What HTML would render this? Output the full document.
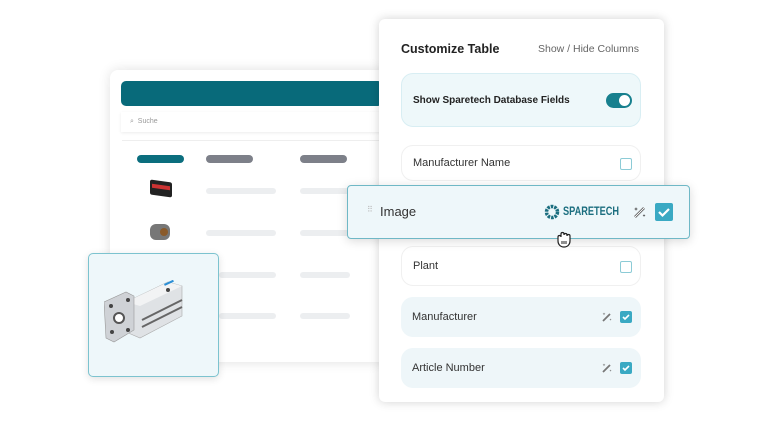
<!DOCTYPE html>
<html><head><meta charset="utf-8"><style>
*{margin:0;padding:0;box-sizing:border-box}
body{width:768px;height:432px;background:#fff;position:relative;overflow:hidden;font-family:"Liberation Sans",sans-serif;color:#333}
.abs{position:absolute}
.pill{position:absolute;height:8px;border-radius:4px}
.line{position:absolute;height:6px;border-radius:3px;background:#eceef0}
.row{position:absolute;left:401px;width:240px;border-radius:12px;font-size:11px;display:flex;align-items:center;padding-left:11px}
.cb{position:absolute;width:12px;height:12px;border:1.5px solid #8ccbd6;border-radius:2px;background:#fff}
.cbf{position:absolute;width:12px;height:12px;border-radius:2px;background:#3aa9c3}
.cbf svg{position:absolute;left:0;top:0}
</style></head><body>
<div class="abs" style="left:110px;top:70px;width:280px;height:292px;background:#fff;border-radius:8px;box-shadow:0 0 12px rgba(0,0,0,.12)"></div>
<div class="abs" style="left:121px;top:81px;width:262px;height:25px;background:#086a7a;border-radius:5px"></div>
<div class="abs" style="left:121px;top:112px;width:262px;height:20px;background:#fff;box-shadow:0 1px 3px rgba(0,0,0,.08)"></div>
<div class="abs" style="left:130px;top:118px;font-size:7px;color:#999">⌕ &nbsp;Suche</div>
<div class="abs" style="left:122px;top:140px;width:262px;height:210px;border-top:1px solid #eee"></div>
<div class="pill" style="left:137px;top:155px;width:47px;background:#0b6e7e"></div>
<div class="pill" style="left:206px;top:155px;width:47px;background:#7d8089"></div>
<div class="pill" style="left:300px;top:155px;width:47px;background:#7d8089"></div>
<div class="line" style="left:206px;top:188px;width:70px"></div>
<div class="line" style="left:300px;top:188px;width:50px"></div>
<div class="line" style="left:206px;top:230px;width:70px"></div>
<div class="line" style="left:300px;top:230px;width:50px"></div>
<div class="line" style="left:219px;top:272px;width:57px"></div>
<div class="line" style="left:300px;top:272px;width:50px"></div>
<div class="line" style="left:219px;top:313px;width:57px"></div>
<div class="line" style="left:300px;top:313px;width:50px"></div>
<div class="abs" style="left:150px;top:181px;width:22px;height:15px;background:#222;border-radius:2px;transform:skewY(8deg)"><div style="margin:4px 2px;height:4px;background:#c33"></div></div>
<div class="abs" style="left:150px;top:224px;width:20px;height:16px;background:#777;border-radius:6px"><div style="margin:4px 0 0 10px;width:8px;height:8px;background:#8a5a2a;border-radius:50%"></div></div>
<div class="abs" style="left:88px;top:253px;width:131px;height:124px;background:#eef7fa;border:1.5px solid #7cc3cf;border-radius:5px;box-shadow:0 2px 8px rgba(0,0,0,.12)"></div>
<svg class="abs" style="left:104px;top:280px" width="100" height="80" viewBox="0 0 100 80">
<polygon points="22,22 64,2 78,6 78,36 36,58 22,52" fill="#dfe2e5" stroke="#aaa" stroke-width=".6"/>
<polygon points="22,22 64,2 78,6 36,26" fill="#f2f3f4"/>
<line x1="38" y1="40" x2="78" y2="20" stroke="#666" stroke-width="2"/>
<line x1="38" y1="47" x2="78" y2="27" stroke="#666" stroke-width="2"/>
<polygon points="0,22 22,12 30,16 30,50 10,62 2,58" fill="#cfd2d6" stroke="#999" stroke-width=".6"/>
<circle cx="15" cy="38" r="5" fill="#fff" stroke="#555" stroke-width="2"/>
<circle cx="7" cy="26" r="2" fill="#444"/><circle cx="24" cy="20" r="2" fill="#444"/><circle cx="24" cy="50" r="2" fill="#444"/><circle cx="8" cy="52" r="2" fill="#444"/>
<circle cx="64" cy="10" r="2" fill="#444"/>
<rect x="60" y="4" width="10" height="2" fill="#2b8fd6" transform="rotate(-25 60 4)"/>
</svg>
<div class="abs" style="left:379px;top:19px;width:285px;height:383px;background:#fff;border-radius:6px;box-shadow:0 0 10px rgba(0,0,0,.18)"></div>
<div class="abs" style="left:401px;top:42px;font-size:12.5px;font-weight:bold;color:#222">Customize Table</div>
<div class="abs" style="left:538px;top:43px;font-size:10.5px;color:#666">Show / Hide Columns</div>
<div class="row" style="top:73px;height:54px;background:#eef8fa;border:1px solid #d8eef3;font-weight:bold;font-size:10px;color:#222">Show Sparetech Database Fields</div>
<div class="abs" style="left:606px;top:93px;width:26px;height:15px;border-radius:8px;background:#17808e"><div style="position:absolute;right:2px;top:2px;width:11px;height:11px;border-radius:50%;background:#fff"></div></div>
<div class="row" style="top:145px;height:36px;border:1px solid #f0f0f0">Manufacturer Name</div>
<div class="cb" style="left:620px;top:158px"></div>
<div class="row" style="top:246px;height:40px;border:1px solid #f0f0f0">Plant</div>
<div class="cb" style="left:620px;top:261px"></div>
<div class="row" style="top:297px;height:40px;background:#eef6f9">Manufacturer</div>
<svg class="abs" style="left:601px;top:311px" width="12" height="12" viewBox="0 0 12 12"><path d="M2 10L9 3" stroke="#777" stroke-width="1.8"/><path d="M3 1.5l.4 1 1 .4-1 .4L3 4.3l-.4-1-1-.4 1-.4zM9.5 7.5l.3.8.8.3-.8.3-.3.8-.3-.8-.8-.3.8-.3z" fill="#777"/></svg>
<div class="cbf" style="left:620px;top:311px"><svg width="12" height="12"><path d="M3 6l2 2 4-4" stroke="#fff" stroke-width="1.6" fill="none"/></svg></div>
<div class="row" style="top:348px;height:40px;background:#eef6f9">Article Number</div>
<svg class="abs" style="left:601px;top:362px" width="12" height="12" viewBox="0 0 12 12"><path d="M2 10L9 3" stroke="#777" stroke-width="1.8"/><path d="M3 1.5l.4 1 1 .4-1 .4L3 4.3l-.4-1-1-.4 1-.4zM9.5 7.5l.3.8.8.3-.8.3-.3.8-.3-.8-.8-.3.8-.3z" fill="#777"/></svg>
<div class="cbf" style="left:620px;top:362px"><svg width="12" height="12"><path d="M3 6l2 2 4-4" stroke="#fff" stroke-width="1.6" fill="none"/></svg></div>
<div class="abs" style="left:347px;top:185px;width:343px;height:54px;background:#eef7fa;border:1.5px solid #6fb8c6;border-radius:4px;box-shadow:0 2px 10px rgba(0,0,0,.15)"></div>
<div class="abs" style="left:367px;top:205px;font-size:8px;color:#bbb;letter-spacing:-1px">⠿</div>
<div class="abs" style="left:380px;top:204px;font-size:13px;color:#333">Image</div>
<svg class="abs" style="left:544px;top:204px" width="16" height="16" viewBox="0 0 16 16"><circle cx="8" cy="8" r="5.5" fill="none" stroke="#1b6e7f" stroke-width="3.5" stroke-dasharray="2.5 1"/></svg>
<div class="abs" style="left:563px;top:206px;font-size:11.5px;font-weight:bold;color:#1b6e7f;transform:scaleX(.8);transform-origin:0 0;white-space:nowrap">SPARETECH</div>
<svg class="abs" style="left:632px;top:204px" width="16" height="16" viewBox="0 0 16 16"><path d="M3 13L12 4" stroke="#444" stroke-width="2.5"/><path d="M3 13L12 4" stroke="#fff" stroke-width="1"/><path d="M4 3l.5 1.5L6 5l-1.5.5L4 7l-.5-1.5L2 5l1.5-.5z M12 10l.4 1L13.5 11.5l-1 .4L12 13l-.4-1-1-.5 1-.4z" fill="#444"/></svg>
<div class="abs" style="left:655px;top:203px;width:18px;height:18px;background:#3aa9c3;border-radius:2px"><svg width="18" height="18"><path d="M4 9l3.5 3.5L14 6" stroke="#fff" stroke-width="2.2" fill="none"/></svg></div>
<svg class="abs" style="left:555px;top:231px" width="18" height="17" viewBox="0 0 18 17"><path d="M3 6c0-2 3-2 3 0V3c0-2 3-2 3 0v1c0-2 3-2 3 0v1c0-2 3-2 3 0v5c0 3-2 6-6 6S3 13 3 10z" fill="#fff" stroke="#222" stroke-width="1.2"/><path d="M7 10v3M9 10v3M11 10v3" stroke="#222"/></svg>
</body></html>
